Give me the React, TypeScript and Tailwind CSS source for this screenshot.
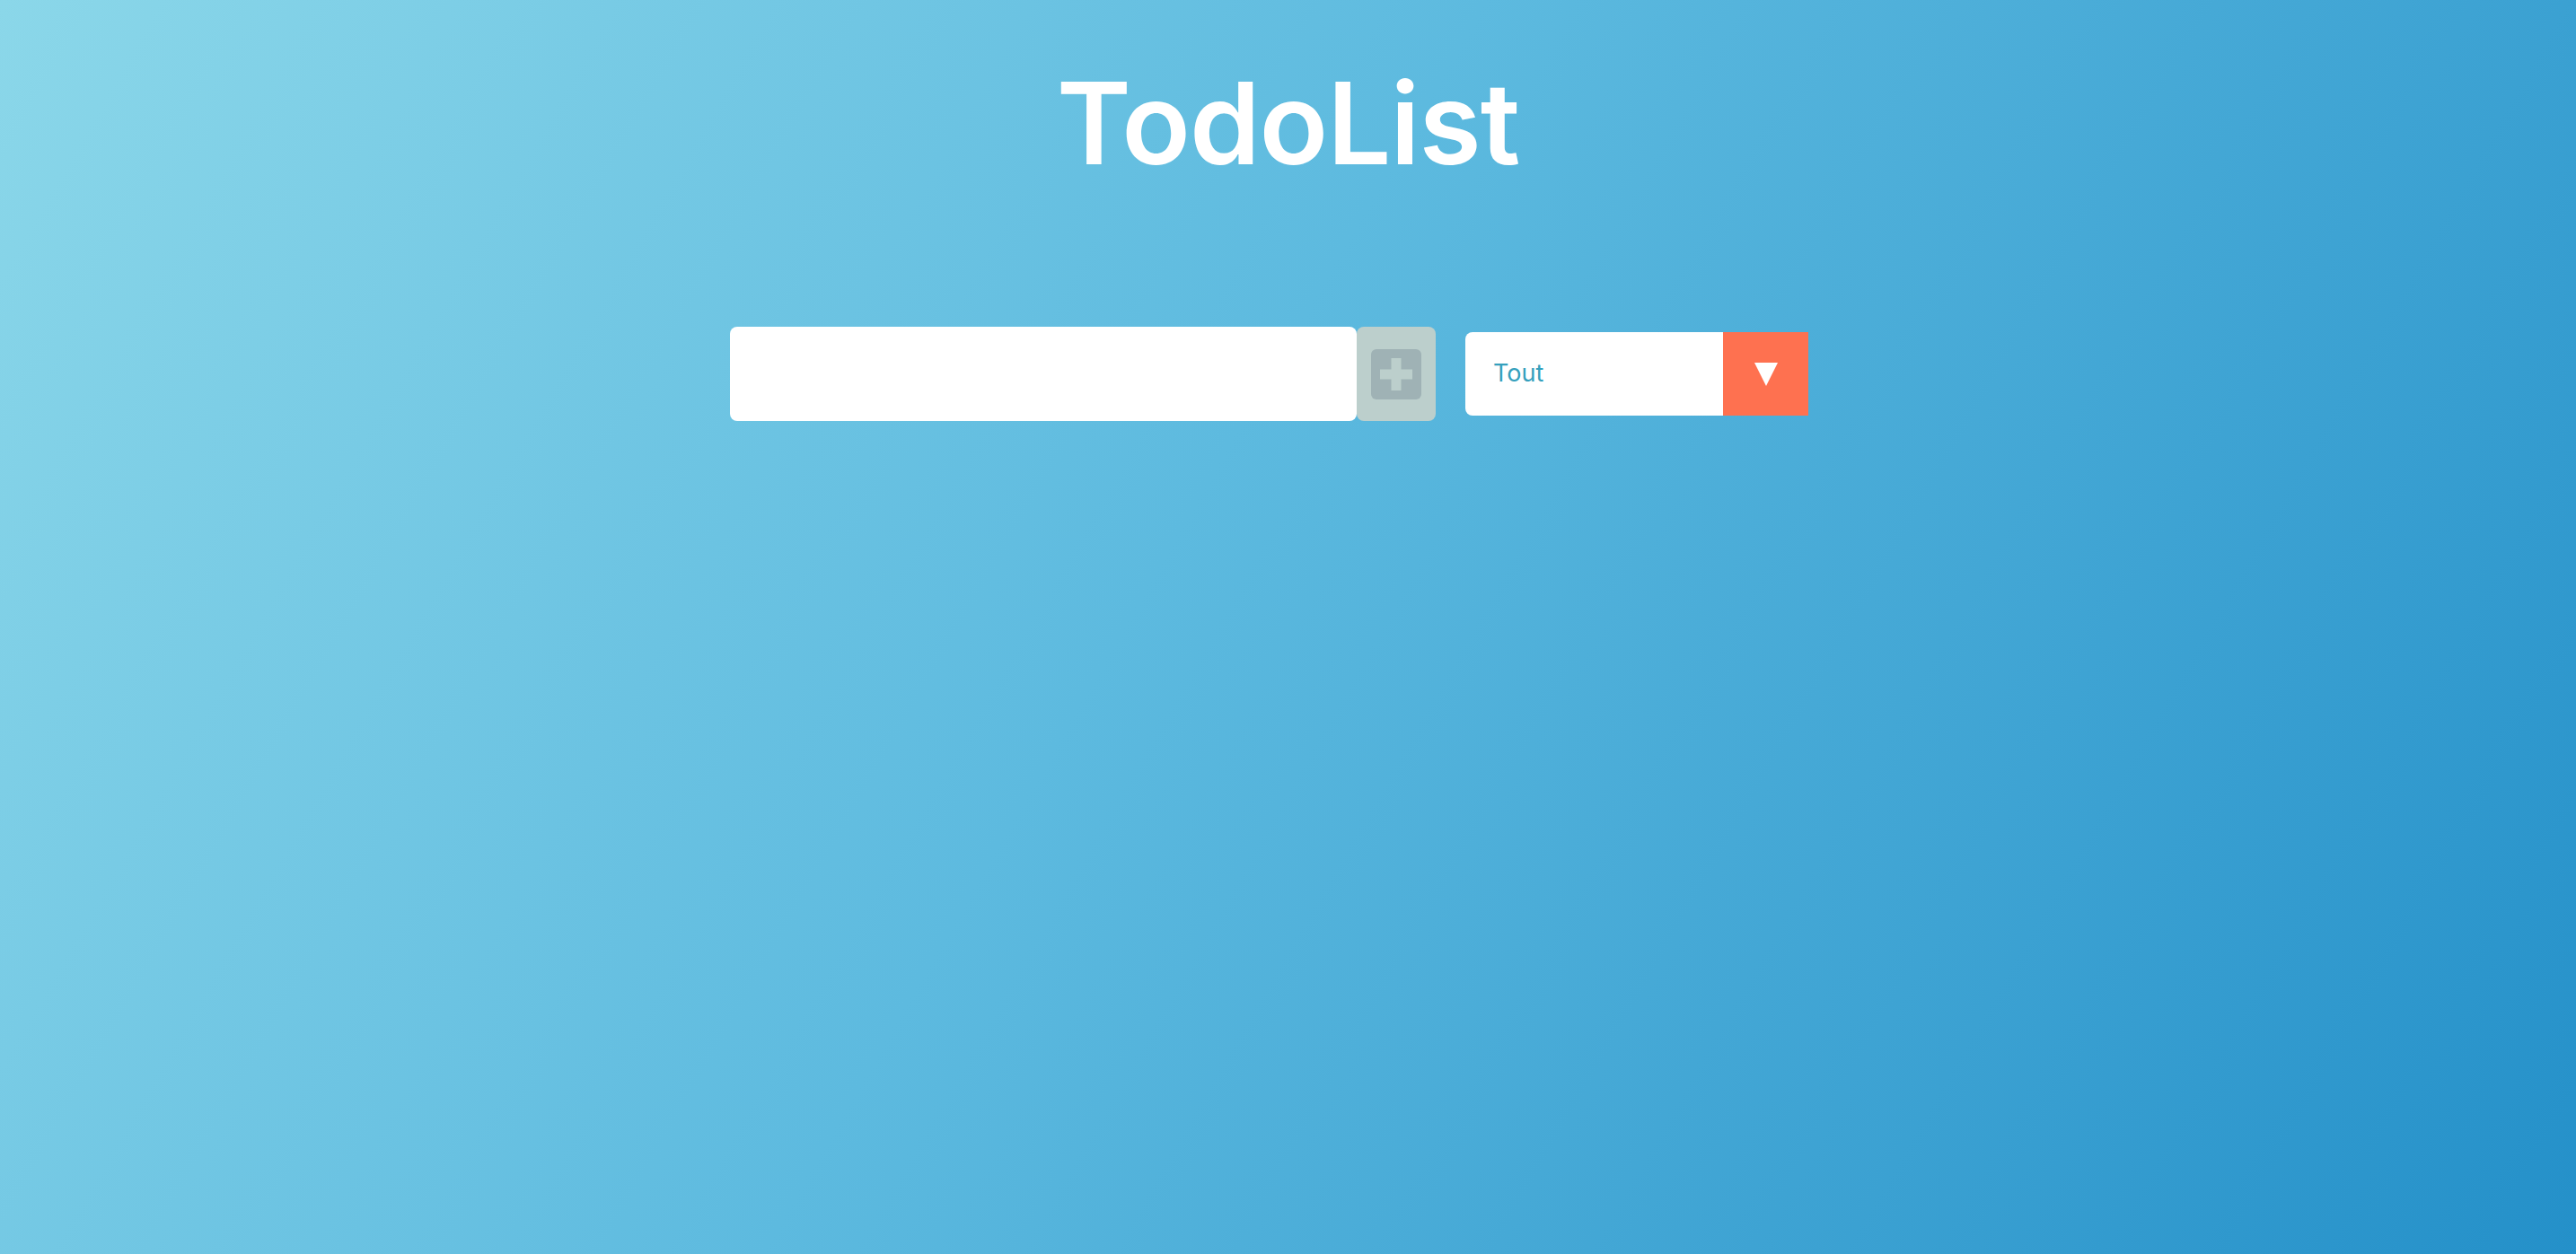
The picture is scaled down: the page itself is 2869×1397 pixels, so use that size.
import React from "react";

export default function App() {
  return (
    <div className="min-h-[1397px] w-full bg-[linear-gradient(120deg,#8bd7e9_0%,#5dbadf_45%,#2490c9_100%)] font-['Inter','Noto_Sans',sans-serif]">
      <header className="pt-[74px] flex justify-center">
        <h1 className="text-[126px] leading-none font-semibold text-white tracking-[-1px]">TodoList</h1>
      </header>
      <form className="mt-[164px] flex items-center justify-center pr-[42px]" onSubmit={(e) => e.preventDefault()}>
        <input
          type="text"
          className="w-[698px] h-[105px] bg-white rounded-[8px] outline-none border-0 px-6 text-[28px]"
        />
        <button
          type="submit"
          className="w-[88px] h-[105px] bg-[#bccfcc] rounded-[8px] flex items-center justify-center"
        >
          <svg width="56" height="56" viewBox="0 0 56 56">
            <rect x="0" y="0" width="56" height="56" rx="6" fill="#9fb2b5" />
            <rect x="10" y="22.5" width="36" height="11" fill="#bccfcc" />
            <rect x="22.5" y="10" width="11" height="36" fill="#bccfcc" />
          </svg>
        </button>
        <div className="ml-[33px] flex h-[93px] w-[382px] rounded-l-[8px] overflow-hidden">
          <div className="flex-1 bg-white flex items-center pl-[31px] text-[27px] text-[#35a0bd]">Tout</div>
          <div className="w-[95px] bg-[#fe7150] flex items-center justify-center">
            <svg width="26" height="26" viewBox="0 0 26 26">
              <polygon points="0,0 26,0 13,26" fill="#ffffff" />
            </svg>
          </div>
        </div>
      </form>
    </div>
  );
}
